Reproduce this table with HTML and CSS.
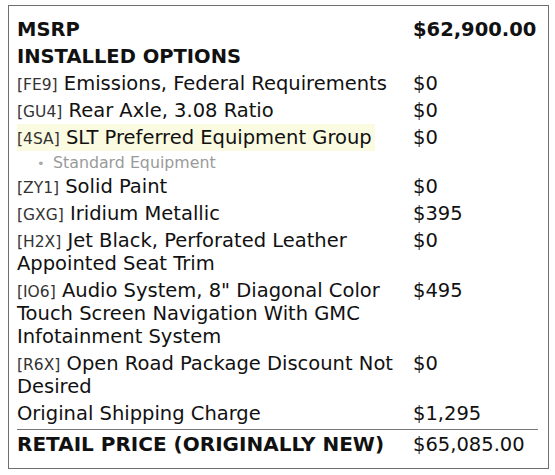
FILE: index.html
```html
<!DOCTYPE html>
<html>
<head>
<meta charset="utf-8">
<link rel="stylesheet" href="styles.css">
</head>
<body>
<div class="box">
  <div class="row head"><div class="desc">MSRP</div><div class="price">$62,900.00</div></div>
  <div class="row head"><div class="desc">INSTALLED OPTIONS</div><div class="price"></div></div>
  <div class="row"><div class="desc"><span class="code">[FE9]</span> Emissions, Federal Requirements</div><div class="price">$0</div></div>
  <div class="row"><div class="desc"><span class="code">[GU4]</span> Rear Axle, 3.08 Ratio</div><div class="price">$0</div></div>
  <div class="row"><div class="desc"><span class="hl"><span class="code">[4SA]</span> SLT Preferred Equipment Group</span>
    <ul class="sub"><li>Standard Equipment</li></ul></div><div class="price">$0</div></div>
  <div class="row"><div class="desc"><span class="code">[ZY1]</span> Solid Paint</div><div class="price">$0</div></div>
  <div class="row"><div class="desc"><span class="code">[GXG]</span> Iridium Metallic</div><div class="price">$395</div></div>
  <div class="row"><div class="desc"><span class="code">[H2X]</span> Jet Black, Perforated Leather Appointed Seat Trim</div><div class="price">$0</div></div>
  <div class="row"><div class="desc"><span class="code">[IO6]</span> Audio System, 8" Diagonal Color Touch Screen Navigation With GMC Infotainment System</div><div class="price">$495</div></div>
  <div class="row"><div class="desc"><span class="code">[R6X]</span> Open Road Package Discount Not Desired</div><div class="price">$0</div></div>
  <div class="row"><div class="desc">Original Shipping Charge</div><div class="price">$1,295</div></div>
  <div class="row total"><div class="desc">RETAIL PRICE (ORIGINALLY NEW)</div><div class="price">$65,085.00</div></div>
</div>
</body>
</html>
```
FILE: styles.css
```css
html, body {
  margin: 0;
  padding: 0;
  background: #fff;
}
body {
  font-family: "DejaVu Sans", sans-serif;
  color: #111;
}
.box {
  margin: 5px 0 0 8px;
  width: 541px;
  height: 464px;
  box-sizing: border-box;
  border: 1px solid #6f6f6f;
  padding: 10px 10px 0 8px;
  font-size: 19.5px;
  line-height: 23px;
}
.row {
  display: grid;
  grid-template-columns: 390px 1fr;
  column-gap: 6px;
  padding: 2px 0;
}
.head {
  font-weight: bold;
}
.code {
  font-size: 15.5px;
  line-height: 1;
  color: #333;
}
.hl {
  background: #fbfbe2;
  padding: 2px 3px 2px 0;
}
.sub {
  margin: 0;
  padding: 7px 0 0 20px;
  font-size: 15.8px;
  line-height: 14px;
  color: #9a9a9a;
  list-style: none;
}
.sub li::before {
  content: "•";
  display: inline-block;
  width: 16px;
  font-size: 13px;
  color: #aaa;
}
.total {
  border-top: 1px solid #777;
  margin-top: 2px;
  padding-top: 3px;
}
.total .desc {
  font-weight: bold;
  font-size: 20px;
}
```
